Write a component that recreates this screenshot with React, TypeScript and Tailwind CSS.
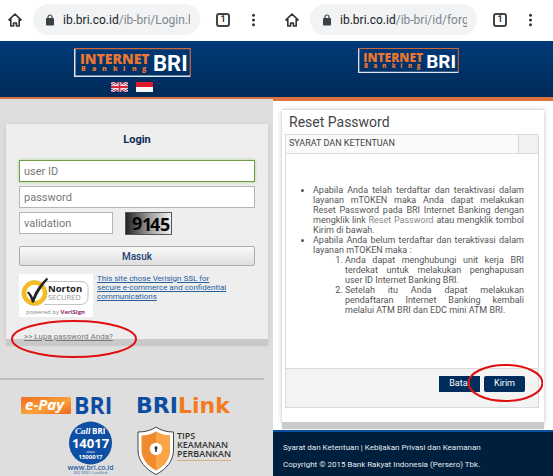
import React from 'react';

const ChromeBar: React.FC<{ host: string; path: string; label: string }> = ({ host, path, label }) => (
  <div className="flex h-[41px] items-center bg-white pb-[2px]">
    <button type="button" aria-label="Home" className="shrink-0">
      <svg width="16" height="16" viewBox="0 0 16 16" fill="none" stroke="#333" strokeWidth="1.6">
        <path d="M1.5 8.4 8 2l6.5 6.4M3.8 7v7h2.8v-3h2.8v3h2.8V7" strokeLinejoin="round" />
      </svg>
    </button>
    <div className="ml-[10px] flex h-[31px] min-w-0 flex-1 items-center rounded-full bg-[#f1f3f4] pr-[10px] pl-3">
      <svg width="10" height="12" viewBox="0 0 10 12" className="mr-[8px] shrink-0">
        <rect x="1" y="4" width="8" height="7.4" rx="1" fill="#3c4043" />
        <path d="M3 4.5V3a2 2 0 0 1 4 0v1.5" fill="none" stroke="#3c4043" strokeWidth="1.2" />
      </svg>
      <span aria-label={label} className="min-w-0 flex-1 overflow-hidden text-[12px] whitespace-nowrap text-[#202124]">
        {host}
        <span className="text-[#80868b]">{path}</span>
      </span>
    </div>
    <button
      type="button"
      aria-label="Tabs"
      className="ml-4 flex h-[14px] w-[14px] shrink-0 items-center justify-center rounded-[3px] border-2 border-[#444] text-[9px] leading-none font-bold text-[#333]"
    >
      1
    </button>
    <button type="button" aria-label="Menu" className="ml-[21px] shrink-0">
      <svg width="5" height="14" viewBox="0 0 5 14" fill="#333">
        <circle cx="2.5" cy="2.2" r="1.5" />
        <circle cx="2.5" cy="7" r="1.5" />
        <circle cx="2.5" cy="11.8" r="1.5" />
      </svg>
    </button>
  </div>
);

const BriLogo: React.FC<{ className: string }> = ({ className }) => (
  <svg viewBox="0 0 117 29" className={className} role="img">
    <path d="M.7 28V.7h115.6v27.6" fill="none" stroke="#c9683a" strokeWidth="1.2" />
    <path d="M.7 1v27.3h115.6" fill="none" stroke="#dce6f2" strokeWidth="1.4" />
    <text x="6" y="16" fontFamily="Open Sans" fontWeight="800" fontSize="14" fill="#ec7530">INTERNET</text>
    <text
      x="7 18 28 39 49 58 68"
      y="23"
      fontFamily="Open Sans"
      fontWeight="800"
      fontSize="7"
      fill="#ec7530"
    >
      Banking
    </text>
    <text x="79" y="23" fontFamily="Roboto" fontWeight="700" fontSize="22" fill="#fff">BRI</text>
  </svg>
);

const FlagUk = () => (
  <svg width="17" height="10" viewBox="0 0 17 10">
    <rect width="17" height="10" fill="#2b3f86" />
    <path d="M0 0l17 10M17 0 0 10" stroke="#fff" strokeWidth="2.4" />
    <path d="M0 0l17 10M17 0 0 10" stroke="#d8273b" strokeWidth="1" />
    <path d="M8.5 0v10M0 5h17" stroke="#fff" strokeWidth="3.6" />
    <path d="M8.5 0v10M0 5h17" stroke="#d8273b" strokeWidth="2" />
  </svg>
);

const FlagId = () => (
  <svg width="17" height="10" viewBox="0 0 17 10">
    <rect width="17" height="10" fill="#f6f6f6" />
    <rect width="17" height="5" fill="#e0182c" />
  </svg>
);

const NortonSeal = () => (
  <svg width="74" height="43" viewBox="0 0 74 43" className="shrink-0">
    <rect width="74" height="43" fill="#fff" />
    <path d="M26 7.5h37a6 6 0 0 1 6 6v10a7 7 0 0 1-7 7H25" fill="none" stroke="#c4c4c4" strokeWidth="1" />
    <circle cx="15.5" cy="19" r="10.4" fill="#fff" stroke="#f5bd1f" strokeWidth="4.2" />
    <circle cx="15.5" cy="19" r="12.6" fill="none" stroke="#b98d24" strokeWidth=".5" strokeDasharray="2 1" />
    <path d="M9.5 17.5c2 1.5 3.4 3.6 4.4 6C16.5 16 21.5 9.5 28 3.5l1 2C23 12 18.5 19 15 28.5h-2C12 25 10.5 21.5 8 18.5z" fill="#222" />
    <text x="29" y="17.5" fontFamily="Open Sans" fontWeight="700" fontSize="9.5" fill="#222">Norton</text>
    <text x="29" y="26" fontFamily="Open Sans" fontSize="7.5" fill="#999">SECURED</text>
    <text x="7" y="39.5" fontFamily="Open Sans" fontSize="6" fill="#888">powered by</text>
    <text x="41.5" y="39.5" fontFamily="Open Sans" fontWeight="700" fontSize="6" fill="#8c2a6b">VeriSign</text>
  </svg>
);

const Captcha = () => (
  <svg width="47" height="23" viewBox="0 0 47 23" role="img">
    <defs>
      <linearGradient id="captcha" x1="0" x2="1">
        <stop offset="0" stopColor="#222" />
        <stop offset=".5" stopColor="#999" />
        <stop offset="1" stopColor="#f4f4f4" />
      </linearGradient>
    </defs>
    <rect x=".5" y=".5" width="46" height="22" fill="url(#captcha)" stroke="#555" />
    <text
      x="7 17 25 35"
      y="18 19 19 19"
      fontFamily="Open Sans"
      fontWeight="700"
      fontSize="18"
      fill="#050505"
    >
      9145
    </text>
  </svg>
);

const EPay = () => (
  <svg width="92" height="18" viewBox="0 0 92 18" className="overflow-visible">
    <defs>
      <linearGradient id="epay" x1="0" x2="1" y2="1">
        <stop offset="0" stopColor="#ef6a22" />
        <stop offset=".55" stopColor="#fba33a" />
        <stop offset="1" stopColor="#ee6522" />
      </linearGradient>
    </defs>
    <rect y="1" width="50" height="17" rx="1.5" fill="url(#epay)" />
    <text x="4" y="13.5" fontFamily="Open Sans" fontWeight="700" fontStyle="italic" fontSize="15" fill="#fff">e-Pay</text>
    <text x="53" y="18" fontFamily="Open Sans" fontWeight="700" fontSize="23" fill="#0c4da2">BRI</text>
  </svg>
);

const BriLink = () => (
  <svg width="98" height="18" viewBox="0 0 98 18" className="overflow-visible">
    <text x="-1" y="17" fontFamily="DejaVu Sans" fontWeight="700" fontSize="22" fill="#0c4da2">
      BRI<tspan fill="#f47a20">Link</tspan>
    </text>
  </svg>
);

const CallBri = () => (
  <svg width="45" height="53" viewBox="0 0 45 53" className="overflow-visible">
    <circle cx="22.5" cy="21" r="21.5" fill="#0f4fa3" />
    <text x="7" y="12" fontFamily="Liberation Serif" fontStyle="italic" fontWeight="700" fontSize="9" fill="#fff">Call</text>
    <text x="24" y="12" fontFamily="Open Sans" fontWeight="700" fontSize="8" fill="#fff">BRI</text>
    <text x="22.5" y="26" textAnchor="middle" fontFamily="Open Sans" fontWeight="700" fontSize="13" fill="#fff">14017</text>
    <text x="22.5" y="31" textAnchor="middle" fontFamily="Open Sans" fontSize="4" fill="#fff">atau</text>
    <text x="22.5" y="37" textAnchor="middle" fontFamily="Open Sans" fontWeight="700" fontSize="6" fill="#fff">1500017</text>
    <text x="22.5" y="48" textAnchor="middle" fontFamily="Open Sans" fontWeight="600" fontSize="7" fill="#2c5ea6">www.bri.co.id</text>
    <text x="22.5" y="52" textAnchor="middle" fontFamily="Open Sans" fontSize="4" fill="#2c5ea6">ISO 9001 Certified</text>
  </svg>
);

const SecurityTips = () => (
  <svg width="98" height="50" viewBox="0 0 98 50">
    <path d="M19 1c5 3.5 11 5 17.5 5v18c0 11-7 19-17.5 24.5C8.5 43 1 35 1 24V6c7 0 13-1.5 18-5z" fill="#fff" stroke="#444" strokeWidth="1" />
    <path d="M19 5.5c4 2.5 9 4 14 4V24c0 9-5.5 15.5-14 20.5C10.5 39.5 4.5 33 4.5 24V9.5c5.5 0 10.5-1.5 14.5-4z" fill="#f08a2e" />
    <path d="M19 5.5c4 2.5 9 4 14 4V24c0 9-5.5 15.5-14 20.5z" fill="#f9a548" />
    <circle cx="19" cy="23" r="6.2" fill="#fff" />
    <path d="M19 20.3a1.7 1.7 0 0 1 .8 3.1v2.6h-1.6v-2.6a1.7 1.7 0 0 1 .8-3.1z" fill="#333" />
    <g fontFamily="Open Sans" fontWeight="600" fontSize="9" fill="#333">
      <text x="40" y="13">TIPS</text>
      <text x="40" y="22">KEAMANAN</text>
      <text x="40" y="31">PERBANKAN</text>
    </g>
    <path d="M40 34.5h54" stroke="#d9a06a" strokeWidth=".8" />
  </svg>
);

const Circled: React.FC<{ className: string }> = ({ className }) => (
  <svg viewBox="0 0 126 38" preserveAspectRatio="none" className={`pointer-events-none absolute ${className}`}>
    <ellipse cx="63" cy="19" rx="62" ry="18" fill="none" stroke="#e01010" strokeWidth="2" vectorEffect="non-scaling-stroke" />
  </svg>
);

const fieldClass =
  'block h-[22px] border bg-white px-1 text-[11px] text-[#333] placeholder:text-[#777] placeholder:opacity-100 focus:outline-none';

const LoginScreen = () => (
  <section className="flex min-w-0 flex-col bg-[#dedede]">
    <div className="bg-white pr-[17px] pl-[7px]">
      <ChromeBar label="Address" host="ib.bri.co.id" path="/ib-bri/Login.html" />
    </div>
    <header className="flex h-[58px] flex-col items-center border-b-2 border-[#d9713f] bg-linear-to-b from-[#003a78] to-[#002a58] pt-[7px]">
      <BriLogo className="mr-[9px] h-[29px] w-[117px]" />
      <div className="mt-[5px] mr-[9px] flex gap-2">
        <FlagUk />
        <FlagId />
      </div>
    </header>

    <form className="mt-[25px] mr-[5px] ml-[6px] bg-[#eee] px-[13px] pt-2 shadow-[0_7px_1px_#c9c9c9,0_2px_5px_#c4c4c4]" onSubmit={(e) => e.preventDefault()}>
      <h1 className="text-center text-[11px] leading-4 font-bold text-[#0e2d55]">Login</h1>
      <div className="mt-3 flex flex-col gap-1">
        <input aria-label="user ID" placeholder="user ID" className={`${fieldClass} w-full border-[#6f9a4a] shadow-[0_0_3px_#a5cf80]`} />
        <input aria-label="password" type="password" placeholder="password" className={`${fieldClass} w-full border-[#b5b5b5]`} />
        <div className="flex gap-3">
          <input aria-label="validation" placeholder="validation" className={`${fieldClass} w-[94px] border-[#b5b5b5]`} />
          <Captcha />
        </div>
      </div>
      <button type="submit" className="mt-[11px] block h-5 w-full rounded-[2px] border border-[#aaa] bg-linear-to-b from-[#fafafa] to-[#dedede] text-[10px] font-medium text-[#1c3f72]">
        Masuk
      </button>
      <div className="mt-2 flex gap-1">
        <NortonSeal />
        <a href="#verisign" className="text-[8px] leading-[9px] text-[#2460a0] underline">
          This site chose Verisign SSL for<br />
          secure e-commerce and confidential<br />
          communications
        </a>
      </div>
      <div className="relative mt-[15px] h-[7px] pl-[5px]">
        <a href="#lupa" className="block text-[8px] leading-[10px] text-[#777] underline">&gt;&gt; Lupa password Anda?</a>
        <Circled className="-top-3 -left-2 h-[38px] w-[126px]" />
      </div>
    </form>

    <hr className="mt-[39px] mr-[9px] border-t-2 border-[#bdbdbd]" />
    <div className="grid grid-cols-[92px_98px] gap-x-6 gap-y-2 pt-4 pl-[21px]">
      <EPay />
      <BriLink />
      <div className="flex justify-end"><CallBri /></div>
      <div className="pt-1"><SecurityTips /></div>
    </div>
  </section>
);

const ResetScreen = () => (
  <section className="flex min-w-0 flex-col bg-white">
    <div className="pr-[20px] pl-[11px]">
      <ChromeBar label="Address" host="ib.bri.co.id" path="/ib-bri/id/forgot" />
    </div>
    <header className="flex h-[60px] justify-center border-b-4 border-[#dd7440] bg-linear-to-b from-[#003a78] to-[#002a58] pt-[7px]">
      <BriLogo className="mr-[9px] h-[25px] w-[101px]" />
    </header>

    <main className="mx-[9px] mt-2 mb-2 border-t border-[#e4dada] bg-white px-[3px] pb-[14px] shadow-[0_7px_1px_#cbcbcb,0_1px_5px_#c4c4c4]">
      <h1 className="py-1 pl-1 text-[14px] leading-4 text-[#444]">Reset Password</h1>
      <div className="mr-[2px] border border-[#dadada]">
        <div className="flex h-[19px] border-b border-[#dadada] bg-[#f1f1f1] text-[#444]">
          <h2 className="mr-[19px] flex-1 border-r border-[#dadada] bg-[#fafafa] pl-[3px] text-[9px] leading-4">SYARAT DAN KETENTUAN</h2>
        </div>
        <ul className="list-disc pt-[31px] pr-[14px] pb-[53px] pl-[27px] text-justify text-[9px] leading-[10px] text-[#555]">
          <li>
            Apabila Anda telah terdaftar dan teraktivasi dalam layanan mTOKEN maka Anda dapat melakukan Reset Password
            pada BRI Internet Banking dengan mengklik link{' '}
            <a href="#reset" className="text-[#888]">Reset Password</a> atau mengklik tombol Kirim di bawah.
          </li>
          <li>
            Apabila Anda belum terdaftar dan teraktivasi dalam layanan mTOKEN maka :
            <ol className="list-decimal pl-8">
              <li>Anda dapat menghubungi unit kerja BRI terdekat untuk melakukan penghapusan user ID Internet Banking BRI.</li>
              <li>Setelah itu Anda dapat melakukan pendaftaran Internet Banking kembali melalui ATM BRI dan EDC mini ATM BRI.</li>
            </ol>
          </li>
        </ul>
        <div className="relative flex h-[39px] justify-end gap-1 border-t border-[#dadada] bg-[#f3f3f3] pt-[7px] pr-[13px]">
          <button type="button" className="h-4 w-[41px] bg-[#002d5c] text-[9px] text-white">Batal</button>
          <button type="button" className="h-4 w-[41px] rounded-[2px] bg-[#002d5c] text-[9px] text-white">Kirim</button>
          <Circled className="-top-[5px] -right-[5px] h-[38px] w-[75px]" />
        </div>
      </div>
    </main>

    <footer className="flex-1 border-t-2 border-[#0c50a0] bg-[#001f3d] px-[10px] pt-[7px] text-[8px] leading-[17px] text-[#e6ebf0]">
      <p>
        <a href="#syarat">Syarat dan Ketentuan</a> | <a href="#privasi">Kebijakan Privasi dan Keamanan</a>
      </p>
      <p>Copyright © 2015 Bank Rakyat Indonesia (Persero) Tbk.</p>
    </footer>
  </section>
);

export default function App() {
  return (
    <div className="grid min-h-screen grid-cols-[273fr_280fr] overflow-hidden font-['Roboto',sans-serif]">
      <LoginScreen />
      <ResetScreen />
    </div>
  );
}
